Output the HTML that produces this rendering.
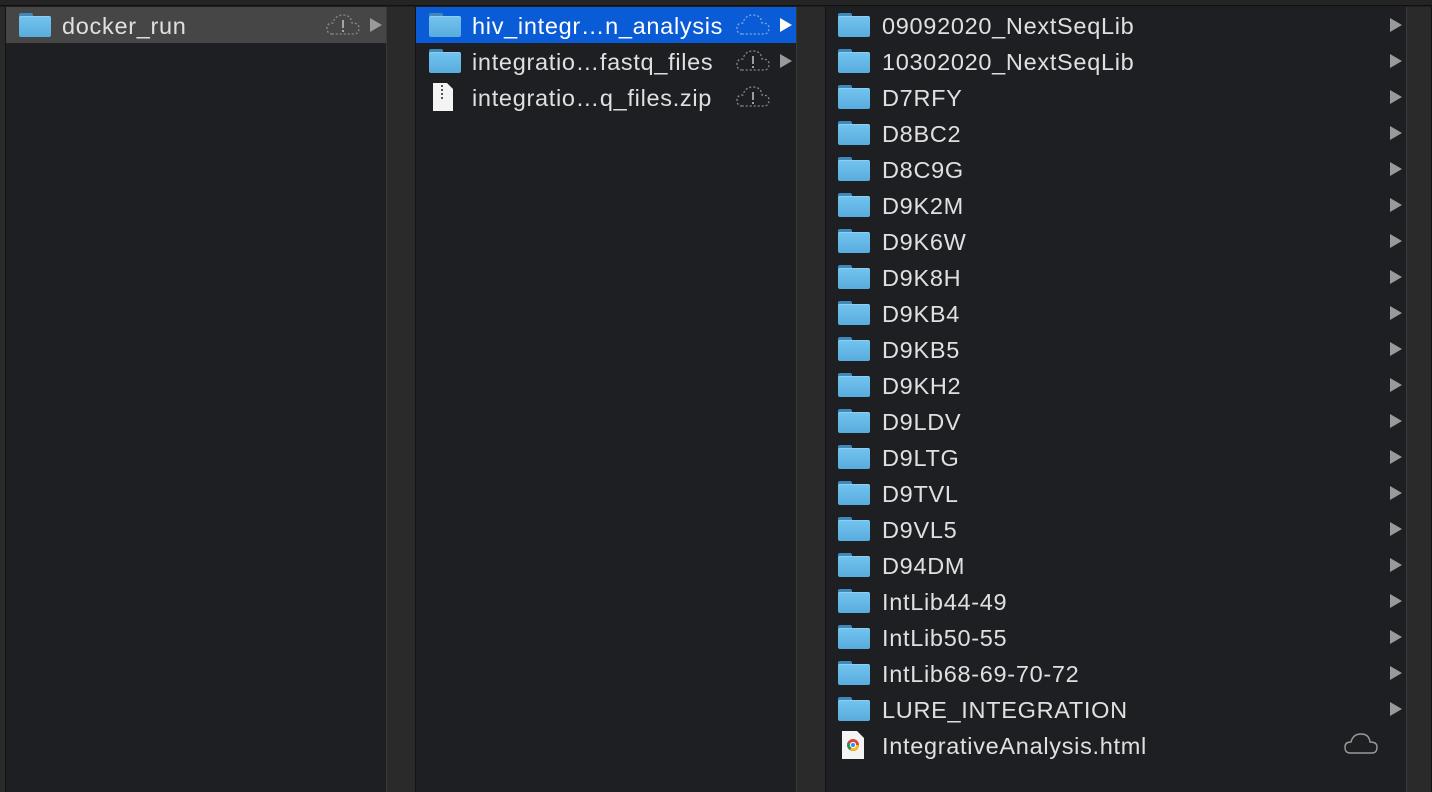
<!DOCTYPE html>
<html><head><meta charset="utf-8"><style>
*{margin:0;padding:0;box-sizing:border-box}
body{width:1432px;height:792px;background:#1e1f22;overflow:hidden;position:relative;font-family:"Liberation Sans",sans-serif;color:#e0e0e0}
.top{position:absolute;left:0;top:0;width:1432px;height:6px;background:#242424;border-bottom:1px solid #111}
.gap{position:absolute;top:7px;height:785px;background:#2a2a2a;border-left:1px solid #3a3a3a;border-right:1px solid #141414}
.row{position:absolute;height:36px;font-size:23.5px;line-height:38px;white-space:nowrap;letter-spacing:0.7px}
.row span{position:absolute;top:0}
.f{position:absolute;width:32px;height:23px;top:6px}
.f:before{content:"";position:absolute;left:0;top:0;width:14px;height:6px;background:#3f88b8;border-radius:2px 2px 0 0}
.f:after{content:"";position:absolute;left:0;top:3px;width:32px;height:20px;background:linear-gradient(#72c3ee,#58acdd);border-radius:2px;border-top:1px solid #8fd0f2}
.ar{position:absolute;top:11px;width:0;height:0;border-top:7px solid transparent;border-bottom:7px solid transparent;border-left:12px solid #9a9a9a}
.cl{position:absolute;top:6px}
</style></head><body>
<div class="top"></div>
<div style="position:absolute;left:0;top:7px;width:6px;height:785px;background:#2a2a2a;border-right:1px solid #141414"></div>
<div class="gap" style="left:386px;width:30px"></div>
<div class="gap" style="left:796px;width:30px"></div>
<div class="gap" style="left:1406px;width:26px"></div>

<div class="row" style="left:6px;top:7px;width:380px;background:#464646">
<div class="f" style="left:13px"></div><span style="left:56px">docker_run</span>
<svg class="cl" style="left:320px" width="34" height="24" viewBox="0 0 34 24"><path d="M6 21 Q1 21 1 15 Q1 10 7 10 Q9 2 17 2 Q25 2 26 10 Q33 10 33 15 Q33 21 28 21 Z" fill="none" stroke="#8a8a8a" stroke-width="1.3" stroke-dasharray="2 2"/><path d="M17 7V15M17 17V19" stroke="#bbb" stroke-width="1.6"/></svg>
<div class="ar" style="left:364px"></div></div>

<div class="row" style="left:416px;top:7px;width:380px;background:#0a5cd6;color:#fff">
<div class="f" style="left:13px"></div><span style="left:56px">hiv_integr…n_analysis</span>
<svg class="cl" style="left:320px" width="34" height="24" viewBox="0 0 34 24"><path d="M6 21 Q1 21 1 15 Q1 10 7 10 Q9 2 17 2 Q25 2 26 10 Q33 10 33 15 Q33 21 28 21 Z" fill="none" stroke="#7fa8e6" stroke-width="1.3" stroke-dasharray="2 2"/></svg>
<div class="ar" style="left:364px;border-left-color:#fff"></div></div>
<div class="row" style="left:416px;top:43px;width:380px">
<div class="f" style="left:13px"></div><span style="left:56px">integratio…fastq_files</span>
<svg class="cl" style="left:320px" width="34" height="24" viewBox="0 0 34 24"><path d="M6 21 Q1 21 1 15 Q1 10 7 10 Q9 2 17 2 Q25 2 26 10 Q33 10 33 15 Q33 21 28 21 Z" fill="none" stroke="#8a8a8a" stroke-width="1.3" stroke-dasharray="2 2"/><path d="M17 7V15M17 17V19" stroke="#bbb" stroke-width="1.6"/></svg>
<div class="ar" style="left:364px"></div></div>
<div class="row" style="left:416px;top:79px;width:380px">
<svg style="position:absolute;left:17px;top:4px" width="20" height="28" viewBox="0 0 20 28"><path d="M0 0H14L20 6V28H0Z" fill="#f4f4f4"/><path d="M9 2V16" stroke="#555" stroke-width="2" stroke-dasharray="2 2"/></svg>
<span style="left:56px">integratio…q_files.zip</span>
<svg class="cl" style="left:320px" width="34" height="24" viewBox="0 0 34 24"><path d="M6 21 Q1 21 1 15 Q1 10 7 10 Q9 2 17 2 Q25 2 26 10 Q33 10 33 15 Q33 21 28 21 Z" fill="none" stroke="#8a8a8a" stroke-width="1.3" stroke-dasharray="2 2"/><path d="M17 7V15M17 17V19" stroke="#bbb" stroke-width="1.6"/></svg></div>

<div class="row" style="left:826px;top:7px;width:580px"><div class="f" style="left:12px"></div><span style="left:56px">09092020_NextSeqLib</span><div class="ar" style="left:564px"></div></div>
<div class="row" style="left:826px;top:43px;width:580px"><div class="f" style="left:12px"></div><span style="left:56px">10302020_NextSeqLib</span><div class="ar" style="left:564px"></div></div>
<div class="row" style="left:826px;top:79px;width:580px"><div class="f" style="left:12px"></div><span style="left:56px">D7RFY</span><div class="ar" style="left:564px"></div></div>
<div class="row" style="left:826px;top:115px;width:580px"><div class="f" style="left:12px"></div><span style="left:56px">D8BC2</span><div class="ar" style="left:564px"></div></div>
<div class="row" style="left:826px;top:151px;width:580px"><div class="f" style="left:12px"></div><span style="left:56px">D8C9G</span><div class="ar" style="left:564px"></div></div>
<div class="row" style="left:826px;top:187px;width:580px"><div class="f" style="left:12px"></div><span style="left:56px">D9K2M</span><div class="ar" style="left:564px"></div></div>
<div class="row" style="left:826px;top:223px;width:580px"><div class="f" style="left:12px"></div><span style="left:56px">D9K6W</span><div class="ar" style="left:564px"></div></div>
<div class="row" style="left:826px;top:259px;width:580px"><div class="f" style="left:12px"></div><span style="left:56px">D9K8H</span><div class="ar" style="left:564px"></div></div>
<div class="row" style="left:826px;top:295px;width:580px"><div class="f" style="left:12px"></div><span style="left:56px">D9KB4</span><div class="ar" style="left:564px"></div></div>
<div class="row" style="left:826px;top:331px;width:580px"><div class="f" style="left:12px"></div><span style="left:56px">D9KB5</span><div class="ar" style="left:564px"></div></div>
<div class="row" style="left:826px;top:367px;width:580px"><div class="f" style="left:12px"></div><span style="left:56px">D9KH2</span><div class="ar" style="left:564px"></div></div>
<div class="row" style="left:826px;top:403px;width:580px"><div class="f" style="left:12px"></div><span style="left:56px">D9LDV</span><div class="ar" style="left:564px"></div></div>
<div class="row" style="left:826px;top:439px;width:580px"><div class="f" style="left:12px"></div><span style="left:56px">D9LTG</span><div class="ar" style="left:564px"></div></div>
<div class="row" style="left:826px;top:475px;width:580px"><div class="f" style="left:12px"></div><span style="left:56px">D9TVL</span><div class="ar" style="left:564px"></div></div>
<div class="row" style="left:826px;top:511px;width:580px"><div class="f" style="left:12px"></div><span style="left:56px">D9VL5</span><div class="ar" style="left:564px"></div></div>
<div class="row" style="left:826px;top:547px;width:580px"><div class="f" style="left:12px"></div><span style="left:56px">D94DM</span><div class="ar" style="left:564px"></div></div>
<div class="row" style="left:826px;top:583px;width:580px"><div class="f" style="left:12px"></div><span style="left:56px">IntLib44-49</span><div class="ar" style="left:564px"></div></div>
<div class="row" style="left:826px;top:619px;width:580px"><div class="f" style="left:12px"></div><span style="left:56px">IntLib50-55</span><div class="ar" style="left:564px"></div></div>
<div class="row" style="left:826px;top:655px;width:580px"><div class="f" style="left:12px"></div><span style="left:56px">IntLib68-69-70-72</span><div class="ar" style="left:564px"></div></div>
<div class="row" style="left:826px;top:691px;width:580px"><div class="f" style="left:12px"></div><span style="left:56px">LURE_INTEGRATION</span><div class="ar" style="left:564px"></div></div>
<div class="row" style="left:826px;top:727px;width:580px">
<svg style="position:absolute;left:16px;top:4px" width="22" height="28" viewBox="0 0 22 28"><path d="M0 0H15L22 7V28H0Z" fill="#f4f4f4"/><circle cx="11" cy="14" r="6" fill="#db4437"/><path d="M11 14L17 14A6 6 0 0 1 8 19Z" fill="#f4c20d"/><path d="M11 14L8 19A6 6 0 0 1 5.5 11.5Z" fill="#0f9d58"/><circle cx="11" cy="14" r="2.6" fill="#4285f4" stroke="#fff" stroke-width="1"/></svg>
<span style="left:56px">IntegrativeAnalysis.html</span>
<svg class="cl" style="left:518px;top:5px" width="34" height="24" viewBox="0 0 34 24"><path d="M6 21 Q1 21 1 15 Q1 10 7 10 Q9 2 17 2 Q25 2 26 10 Q33 10 33 15 Q33 21 28 21 Z" fill="none" stroke="#9a9a9a" stroke-width="1.4"/></svg></div>
</body></html>
